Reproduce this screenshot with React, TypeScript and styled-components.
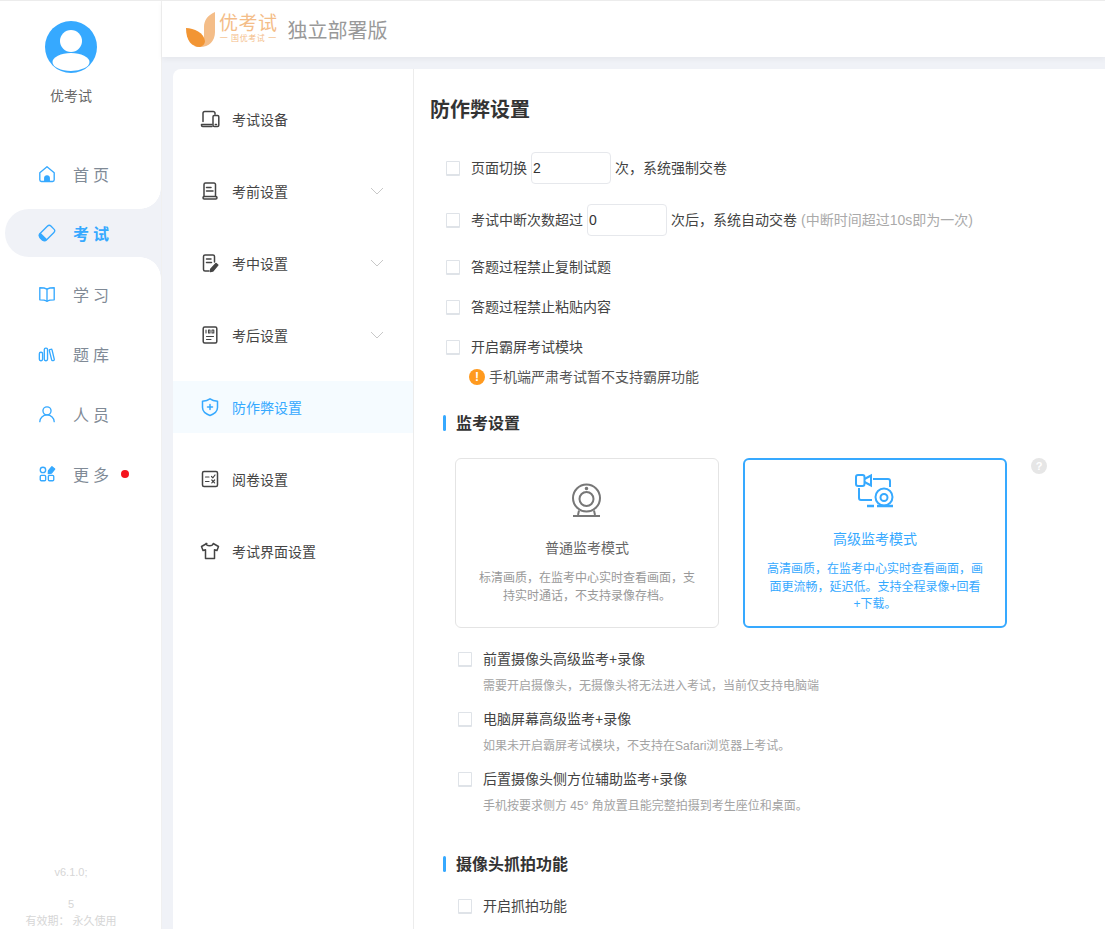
import React from 'react'
import styled, { createGlobalStyle } from 'styled-components'

const BLUE = '#36a9ff'

const GlobalStyle = createGlobalStyle`
  html, body {
    margin: 0;
    height: 100%;
    overflow: hidden;
    background: #f0f2f7;
    font-family: "Liberation Sans", "Noto Sans CJK SC", sans-serif;
    font-size: 14px;
  }
  * {
    box-sizing: border-box;
  }
`

const Page = styled.div`
  display: flex;
  height: 929px;
  overflow: hidden;
  border-top: 1px solid #ececec;
`

const Sidebar = styled.aside`
  width: 161px;
  flex-shrink: 0;
  display: flex;
  flex-direction: column;
  background: #fff;
`

const Profile = styled.div`
  width: 142px;
  display: flex;
  flex-direction: column;
  align-items: center;
  padding-top: 20px;
  gap: 13px;
  color: #666;
  font-size: 14px;
  line-height: 20px;
`

const SideNav = styled.nav`
  display: flex;
  flex-direction: column;
  margin-top: 38px;
  background: #fff;
`

const SideItem = styled.a<{ $active?: boolean }>`
  position: relative;
  display: flex;
  align-items: center;
  height: ${p => (p.$active ? 48 : 60)}px;
  margin: ${p => (p.$active ? '5px 0 7px 5px' : '0 0 0 5px')};
  padding-left: 33px;
  gap: 17px;
  border-radius: 24px 0 0 24px;
  font-size: 16px;
  letter-spacing: 4px;
  color: ${p => (p.$active ? BLUE : '#808a96')};
  font-weight: ${p => (p.$active ? 700 : 400)};
  background: ${p => (p.$active ? '#f0f2f7' : 'transparent')};

  ${p =>
    p.$active &&
    `
    &::before, &::after {
      content: '';
      position: absolute;
      right: 0;
      width: 21px;
      height: 21px;
    }
    &::before {
      top: -21px;
      background: radial-gradient(circle at 0 0, #fff 20.5px, #f0f2f7 21px);
    }
    &::after {
      bottom: -21px;
      background: radial-gradient(circle at 0 100%, #fff 20.5px, #f0f2f7 21px);
    }
  `}
`

const RedDot = styled.i`
  width: 8px;
  height: 8px;
  margin-left: -9px;
  border-radius: 50%;
  background: #f5141e;
`

const VersionInfo = styled.div`
  width: 142px;
  margin-top: auto;
  display: flex;
  flex-direction: column;
  align-items: center;
  font-size: 11px;
  line-height: 16px;
  color: #d6d6d6;
`

const VersionLine = styled.span<{ $gap?: number }>`
  margin-top: ${p => p.$gap ?? 0}px;
`

const Body = styled.div`
  flex: 1;
  min-width: 0;
  display: flex;
  flex-direction: column;
  border-left: 1px solid #f0f0f0;
`

const Header = styled.header`
  height: 56px;
  flex-shrink: 0;
  display: flex;
  align-items: center;
  padding-left: 24px;
  background: #fff;
  box-shadow: 0 2px 6px rgba(0, 0, 0, 0.05);
`

const LogoMark = styled.svg`
  width: 32px;
  height: 36px;
`

const LogoText = styled.div`
  display: flex;
  flex-direction: column;
  align-items: center;
  margin: 0 0 2px 1px;
  color: #f4bd88;
`

const LogoName = styled.span`
  font-size: 19px;
  line-height: 22px;
  letter-spacing: 0.5px;
`

const LogoSlogan = styled.span`
  font-size: 8px;
  line-height: 8px;
  letter-spacing: 0.6px;
  white-space: nowrap;
`

const Edition = styled.span`
  margin-left: 10px;
  font-size: 20px;
  color: #999;
`

const Panel = styled.main`
  flex: 1;
  display: flex;
  margin: 12px 0 0 11px;
  background: #fff;
  border-radius: 8px 0 0 0;
  min-height: 0;
`

const SettingsMenu = styled.nav`
  width: 241px;
  flex-shrink: 0;
  display: flex;
  flex-direction: column;
  gap: 20px;
  padding-top: 24px;
  border-right: 1px solid #ececec;
`

const MenuItem = styled.a<{ $active?: boolean }>`
  display: flex;
  align-items: center;
  height: 52px;
  padding: 0 29px 0 27px;
  gap: 12px;
  font-size: 14px;
  color: ${p => (p.$active ? BLUE : '#444')};
  background: ${p => (p.$active ? '#f5fbff' : 'transparent')};
`

const MenuLabel = styled.span`
  flex: 1;
`

const Content = styled.section`
  flex: 1;
  min-width: 0;
  padding: 27px 0 0 16px;
`

const PageTitle = styled.h1`
  margin: 0 0 28px;
  font-size: 20px;
  line-height: 28px;
  font-weight: 700;
  color: #333;
`

const Row = styled.div<{ $top?: number; $height?: number; $indent?: number }>`
  display: flex;
  align-items: center;
  height: ${p => p.$height ?? 20}px;
  margin-top: ${p => p.$top ?? 20}px;
  margin-left: ${p => p.$indent ?? 16}px;
  color: #444;
  font-size: 14px;
  white-space: nowrap;
`

const RowText = styled.span`
  padding-bottom: 2px;
`

const Check = styled.span`
  width: 14px;
  height: 15px;
  flex-shrink: 0;
  margin-right: 11px;
  background: #fff;
  border: 1px solid #dfe3e8;
  border-bottom-width: 2px;
  border-radius: 1px;
`

const NumberBox = styled.span`
  display: inline-flex;
  align-items: center;
  width: 80px;
  height: 32px;
  margin: 0 4px;
  padding-left: 1px;
  border: 1px solid #e6e8ec;
  border-radius: 4px;
  color: #333;
  font-size: 14px;
`

const Hint = styled.span`
  margin-left: 4px;
  color: #aaa;
  font-size: 14px;
`

const Warning = styled.div`
  display: flex;
  align-items: center;
  height: 20px;
  margin: 10px 0 0 39px;
  gap: 4px;
  color: #555;
  white-space: nowrap;
`

const WarnDot = styled.span`
  width: 16px;
  height: 16px;
  display: flex;
  align-items: center;
  justify-content: center;
  border-radius: 50%;
  background: #ff9a1f;
  color: #fff;
  font-size: 12px;
  font-weight: 700;
`

const SectionTitle = styled.h2<{ $top: number }>`
  display: flex;
  align-items: center;
  height: 20px;
  margin: ${p => p.$top}px 0 0 13px;
  font-size: 16px;
  font-weight: 700;
  color: #333;

  &::before {
    content: '';
    width: 3px;
    height: 16px;
    margin-right: 10px;
    border-radius: 2px;
    background: ${BLUE};
  }
`

const Modes = styled.div`
  display: flex;
  align-items: flex-start;
  margin: 25px 0 0 25px;
  gap: 24px;
`

const ModeCard = styled.div<{ $active?: boolean }>`
  width: 264px;
  height: 170px;
  display: flex;
  flex-direction: column;
  align-items: center;
  padding: ${p => (p.$active ? '13px 20px 0' : '23px 20px 0')};
  text-align: center;
  border-radius: 6px;
  border: ${p => (p.$active ? `2px solid ${BLUE}` : '1px solid #e4e4e4')};
  color: ${p => (p.$active ? BLUE : '#999')};
`

const ModeIcon = styled.svg`
  width: 40px;
  height: 40px;
`

const ModeName = styled.div<{ $active?: boolean }>`
  margin-top: 16px;
  font-size: 14px;
  line-height: 20px;
  color: ${p => (p.$active ? BLUE : '#666')};
`

const ModeDesc = styled.div<{ $active?: boolean }>`
  margin-top: ${p => (p.$active ? 12 : 11)}px;
  font-size: 12px;
  line-height: ${p => (p.$active ? 17.5 : 18)}px;
`

const HelpMark = styled.span`
  width: 16px;
  height: 16px;
  display: flex;
  align-items: center;
  justify-content: center;
  border-radius: 50%;
  background: #e6e6e6;
  color: #fff;
  font-size: 11px;
  font-weight: 700;
`

const Options = styled.div`
  margin-top: 21px;
`

const Option = styled.div`
  margin-left: 28px;
  height: 60px;
`

const OptionHead = styled.div`
  display: flex;
  align-items: center;
  height: 20px;
  color: #444;
  white-space: nowrap;
`

const OptionNote = styled.div`
  margin: 7px 0 0 25px;
  font-size: 12px;
  line-height: 20px;
  color: #a3a3a3;
  white-space: nowrap;
`

const Ico = styled.svg.attrs({
  viewBox: '0 0 20 20',
  fill: 'none',
  stroke: 'currentColor',
  strokeWidth: 1.5,
})`
  width: 20px;
  height: 20px;
  flex-shrink: 0;
  stroke-linejoin: round;
  stroke-linecap: round;
`

const SideIco = styled(Ico)`
  width: 18px;
  height: 18px;
  color: ${BLUE};
`

const navIcons: Record<string, React.ReactNode> = {
  home: (
    <>
      <path d="M2 8.500 10 2l8 6.500v8a1.800 1.800 0 0 1-1.800 1.800H3.800A1.800 1.800 0 0 1 2 16.500z" />
      <path d="M7.500 18v-3.500a2.500 2.500 0 0 1 5 0V18z" fill="currentColor" />
    </>
  ),
  exam: (
    <>
      <rect x="1.500" y="5" width="17" height="10" rx="2.600" transform="rotate(-45 10 10)" />
      <path d="M2.800 10.700 9.300 17.200 8 18a3 3 0 0 1-3.200-.3l-2.500-2.500a3.200 3.200 0 0 1 .5-4.500z" fill="currentColor" />
    </>
  ),
  study: (
    <>
      <path d="M10 4.500C8 3.300 5 3 2 3v13.500c3 0 6 .3 8 1.500 2-1.200 5-1.500 8-1.500V3c-3 0-6 .3-8 1.500z" />
      <path d="M10 4.500V18" />
    </>
  ),
  bank: (
    <>
      <rect x="1.500" y="8" width="3.600" height="9.500" rx="1.600" />
      <rect x="7" y="3.500" width="3.600" height="14" rx="1.600" />
      <path d="m13 5.200 1.500-.4c.5-.1 1 .2 1.100.7l2.500 10.400c.1.600-.2 1.100-.8 1.300l-.9.200c-.6.100-1.100-.2-1.200-.8L12.600 6.200c-.1-.5 0-.9.400-1z" />
    </>
  ),
  user: (
    <>
      <circle cx="10" cy="6.500" r="4.500" />
      <path d="M2 18.500c0-4 3.500-7.500 8-7.500s8 3.500 8 7.500" />
    </>
  ),
  more: (
    <>
      <circle cx="5.500" cy="5.500" r="3" />
      <rect x="2.500" y="11.500" width="6" height="6" rx="1.200" />
      <rect x="11.500" y="11.500" width="6" height="6" rx="1.200" />
      <path d="m15.500 2 3 2.500-3.500 4.500-3.500.5.200-3.200z" fill="currentColor" />
    </>
  ),
}

const menuIcons: Record<string, React.ReactNode> = {
  device: (
    <>
      <path d="M3 12.500V4.300A1.800 1.800 0 0 1 4.800 2.500h8.400A1.800 1.800 0 0 1 15 4.300v1" />
      <path d="M12 15.500H1.500v.8c0 .7.500 1.200 1.200 1.200H12" />
      <rect x="13" y="6.500" width="5.800" height="11" rx="1.200" />
      <path d="M15.300 15.500h1.200" />
    </>
  ),
  before: (
    <>
      <path d="M4 15.500V3.500A1.500 1.500 0 0 1 5.500 2H14a1.500 1.500 0 0 1 1.500 1.500v12" />
      <rect x="3" y="15.500" width="14" height="2.500" rx="1.200" />
      <path d="M6.500 6.500H11M6.500 10H13" />
    </>
  ),
  during: (
    <>
      <path d="M9 18H5a1.500 1.500 0 0 1-1.500-1.500v-13A1.500 1.500 0 0 1 5 2h8a1.500 1.500 0 0 1 1.500 1.500V9" />
      <path d="M6.500 6H11M6.500 9.500h5" />
      <path d="m16 10.500 1.800 1.500-5 6-2.300.5.200-2.300z" fill="currentColor" />
    </>
  ),
  after: (
    <>
      <rect x="3.200" y="2" width="13.600" height="16" rx="1.500" />
      <path d="M6 5v3M8.500 5h1.500v3H8.500zM12 5h1.800v3H12zM6.500 11.500h7M6.500 14.500h4.500" strokeWidth="1.100" />
    </>
  ),
  shield: (
    <>
      <path d="M10 1.800c2 1.500 4.500 2.200 7.500 2.400v6.300c0 3.600-3.200 6.400-7.500 8-4.300-1.600-7.500-4.400-7.500-8V4.200C5.500 4 8 3.300 10 1.800z" />
      <path d="M10 7.500v5M7.500 10h5" />
    </>
  ),
  review: (
    <>
      <rect x="2.500" y="2.500" width="15" height="15" rx="1.500" />
      <path d="M5.500 8h3.500M5.500 12.500h3.500M11.500 7.500l1.300 1.300 2.200-2.800M11.800 11l2.800 2.800M14.600 11l-2.800 2.800" strokeWidth="1.200" />
    </>
  ),
  shirt: <path d="M6.800 2.500 1.500 5.500l1.500 4 2.500-.8V17.500h9V8.700l2.500.8 1.500-4-5.300-3c-.5 3-6.700 3-7.200 0z" />,
}

const sideItems = [
  { key: 'home', label: '首页' },
  { key: 'exam', label: '考试', active: true },
  { key: 'study', label: '学习' },
  { key: 'bank', label: '题库' },
  { key: 'user', label: '人员' },
  { key: 'more', label: '更多', dot: true },
]

const menuItems = [
  { key: 'device', label: '考试设备' },
  { key: 'before', label: '考前设置', arrow: true },
  { key: 'during', label: '考中设置', arrow: true },
  { key: 'after', label: '考后设置', arrow: true },
  { key: 'shield', label: '防作弊设置', active: true },
  { key: 'review', label: '阅卷设置' },
  { key: 'shirt', label: '考试界面设置' },
]

const cameraOptions = [
  { label: '前置摄像头高级监考+录像', note: '需要开启摄像头，无摄像头将无法进入考试，当前仅支持电脑端' },
  { label: '电脑屏幕高级监考+录像', note: '如果未开启霸屏考试模块，不支持在Safari浏览器上考试。' },
  { label: '后置摄像头侧方位辅助监考+录像', note: '手机按要求侧方 45° 角放置且能完整拍摄到考生座位和桌面。' },
]

function Avatar() {
  return (
    <svg width="52" height="52" viewBox="0 0 52 52">
      <circle cx="26" cy="26" r="26" fill={BLUE} />
      <circle cx="26" cy="20" r="11" fill="#fff" />
      <ellipse cx="26" cy="41" rx="18.500" ry="9" fill="#fff" />
    </svg>
  )
}

function Logo() {
  return (
    <>
      <LogoMark viewBox="0 0 32 36">
        <path d="M29 1v20c0 9-6 15-15 15-3 0-5-.5-6-1 6-1 10-4 10-11V16c0-7 4-12 11-15z" fill="#f4bd88" />
        <path d="M0 17c8 0 18 5 19 13 0 3-2 5-5 6C6 36 0 30 0 17z" fill="#f29533" />
      </LogoMark>
      <LogoText>
        <LogoName>优考试</LogoName>
        <LogoSlogan>一 国优考试 一</LogoSlogan>
      </LogoText>
    </>
  )
}

function Chevron() {
  return (
    <svg width="14" height="8" viewBox="0 0 14 8" fill="none" stroke="#c8c8c8" strokeWidth="1">
      <path d="m1 1 6 6 6-6" />
    </svg>
  )
}

export default function App() {
  return (
    <>
      <GlobalStyle />
      <Page>
        <Sidebar>
          <Profile>
            <Avatar />
            <span>优考试</span>
          </Profile>
          <SideNav>
            {sideItems.map(item => (
              <SideItem key={item.key} $active={item.active}>
                <SideIco>{navIcons[item.key]}</SideIco>
                {item.label}
                {item.dot && <RedDot />}
              </SideItem>
            ))}
          </SideNav>
          <VersionInfo>
            <VersionLine>v6.1.0;</VersionLine>
            <VersionLine $gap={16}>5</VersionLine>
            <VersionLine $gap={1}>有效期： 永久使用</VersionLine>
          </VersionInfo>
        </Sidebar>
        <Body>
          <Header>
            <Logo />
            <Edition>独立部署版</Edition>
          </Header>
          <Panel>
            <SettingsMenu>
              {menuItems.map(item => (
                <MenuItem key={item.key} $active={item.active}>
                  <Ico>{menuIcons[item.key]}</Ico>
                  <MenuLabel>{item.label}</MenuLabel>
                  {item.arrow && <Chevron />}
                </MenuItem>
              ))}
            </SettingsMenu>
            <Content>
              <PageTitle>防作弊设置</PageTitle>
              <Row $top={0} $height={32}>
                <Check />
                <RowText>页面切换</RowText>
                <NumberBox>2</NumberBox>
                <RowText>次，系统强制交卷</RowText>
              </Row>
              <Row $height={32}>
                <Check />
                <RowText>考试中断次数超过</RowText>
                <NumberBox>0</NumberBox>
                <RowText>
                  次后，系统自动交卷
                  <Hint>(中断时间超过10s即为一次)</Hint>
                </RowText>
              </Row>
              <Row $top={21}>
                <Check />
                <RowText>答题过程禁止复制试题</RowText>
              </Row>
              <Row>
                <Check />
                <RowText>答题过程禁止粘贴内容</RowText>
              </Row>
              <Row>
                <Check />
                <RowText>开启霸屏考试模块</RowText>
              </Row>
              <Warning>
                <WarnDot>!</WarnDot>
                <RowText>手机端严肃考试暂不支持霸屏功能</RowText>
              </Warning>
              <SectionTitle $top={26}>
                <RowText>监考设置</RowText>
              </SectionTitle>
              <Modes>
                <ModeCard>
                  <ModeIcon viewBox="0 0 40 40" fill="none" stroke="#777" strokeWidth="2">
                    <circle cx="19.500" cy="16" r="13.500" />
                    <circle cx="19.500" cy="17" r="7" />
                    <circle cx="19.500" cy="6.500" r="0.800" fill="#777" />
                    <path d="M12 28.500 11 33M27 28.500l1 4.500M6 34h27" />
                  </ModeIcon>
                  <ModeName>普通监考模式</ModeName>
                  <ModeDesc>标清画质，在监考中心实时查看画面，支持实时通话，不支持录像存档。</ModeDesc>
                </ModeCard>
                <ModeCard $active>
                  <ModeIcon viewBox="0 0 40 40" fill="none" stroke={BLUE} strokeWidth="2">
                    <rect x="1" y="2" width="8.500" height="11" rx="2" />
                    <path d="m9.500 6 6.500-3.500v10L9.500 9M18 6h15a2 2 0 0 1 2 2v6M4 15v10a2 2 0 0 0 2 2h11" />
                    <circle cx="29" cy="24" r="8.500" />
                    <circle cx="29" cy="24.500" r="3.500" />
                    <path d="M12 33h7M22 33h16" strokeWidth="2.500" />
                  </ModeIcon>
                  <ModeName $active>高级监考模式</ModeName>
                  <ModeDesc $active>高清画质，在监考中心实时查看画面，画面更流畅，延迟低。支持全程录像+回看+下载。</ModeDesc>
                </ModeCard>
                <HelpMark>?</HelpMark>
              </Modes>
              <Options>
                {cameraOptions.map(option => (
                  <Option key={option.label}>
                    <OptionHead>
                      <Check />
                      <RowText>{option.label}</RowText>
                    </OptionHead>
                    <OptionNote>{option.note}</OptionNote>
                  </Option>
                ))}
              </Options>
              <SectionTitle $top={25}>
                <RowText>摄像头抓拍功能</RowText>
              </SectionTitle>
              <Row $top={22} $indent={28}>
                <Check />
                <RowText>开启抓拍功能</RowText>
              </Row>
            </Content>
          </Panel>
        </Body>
      </Page>
    </>
  )
}
